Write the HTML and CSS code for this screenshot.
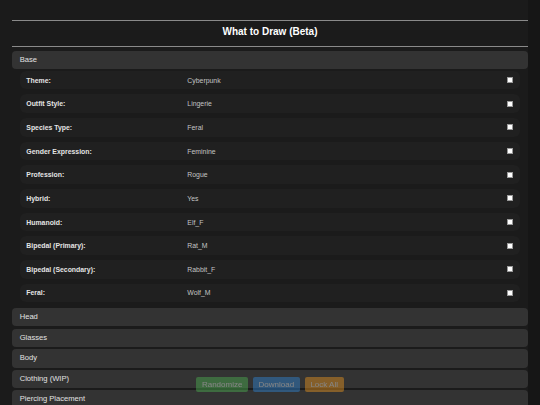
FILE: index.html
```html
<!DOCTYPE html>
<html>
<head>
<meta charset="utf-8">
<link rel="stylesheet" href="styles.css">
</head>
<body>
<div class="page">
  <hr class="rule">
  <h1 class="title">What to Draw (Beta)</h1>
  <hr class="rule">
  <section class="section open">
    <div class="sec-head">Base</div>
    <div class="sec-body">
      <div class="row"><span class="label">Theme:</span><span class="value">Cyberpunk</span><span class="check"></span></div>
      <div class="row"><span class="label">Outfit Style:</span><span class="value">Lingerie</span><span class="check"></span></div>
      <div class="row"><span class="label">Species Type:</span><span class="value">Feral</span><span class="check"></span></div>
      <div class="row"><span class="label">Gender Expression:</span><span class="value">Feminine</span><span class="check"></span></div>
      <div class="row"><span class="label">Profession:</span><span class="value">Rogue</span><span class="check"></span></div>
      <div class="row"><span class="label">Hybrid:</span><span class="value">Yes</span><span class="check"></span></div>
      <div class="row"><span class="label">Humanoid:</span><span class="value">Elf_F</span><span class="check"></span></div>
      <div class="row"><span class="label">Bipedal (Primary):</span><span class="value">Rat_M</span><span class="check"></span></div>
      <div class="row"><span class="label">Bipedal (Secondary):</span><span class="value">Rabbit_F</span><span class="check"></span></div>
      <div class="row"><span class="label">Feral:</span><span class="value">Wolf_M</span><span class="check"></span></div>
    </div>
  </section>
  <section class="section"><div class="sec-head">Head</div></section>
  <section class="section"><div class="sec-head">Glasses</div></section>
  <section class="section"><div class="sec-head">Body</div></section>
  <section class="section"><div class="sec-head">Clothing (WIP)</div></section>
  <section class="section"><div class="sec-head">Piercing Placement</div></section>
</div>
<div class="actions">
  <button class="btn green">Randomize</button>
  <button class="btn blue">Download</button>
  <button class="btn orange">Lock All</button>
</div>
</body>
</html>
```
FILE: styles.css
```css
html {
  background: #161616;
}
body {
  margin: 0;
  font-family: "Liberation Sans", Arial, sans-serif;
  color: #ddd;
}
.page {
  width: 528px;
  box-sizing: border-box;
  padding: 20px 0 20px 12px;
  background: #1b1b1b;
}
.rule {
  border: 0;
  height: 1px;
  margin: 0;
  background: #8a8a8a;
}
.title {
  margin: 0;
  height: 25px;
  box-sizing: border-box;
  padding-top: 5px;
  font-size: 10px;
  line-height: 12px;
  font-weight: bold;
  text-align: center;
  color: #fff;
}
.rule + .section {
  margin-top: 4px;
}
.section {
  margin-bottom: 2.2px;
}
.sec-head {
  height: 18.4px;
  line-height: 18.4px;
  padding-left: 7.7px;
  background: #333333;
  border-radius: 4px;
  font-size: 7.6px;
  color: #e2e2e2;
}
.sec-body {
  display: flex;
  flex-direction: column;
  gap: 5.07px;
  padding: 1.4px 8px 3.5px 8px;
}
.row {
  display: flex;
  align-items: center;
  height: 18.6px;
  padding: 0 7.5px 0 6.3px;
  background: #202020;
  border-radius: 6px;
  font-size: 6.9px;
}
.label {
  width: 161px;
  font-weight: bold;
  color: #e4e4e4;
}
.value {
  color: #c4c4c4;
}
.check {
  margin-left: auto;
  width: 6px;
  height: 6px;
  box-sizing: border-box;
  background: #fff;
  border: 0.5px solid #999;
}
.actions {
  position: fixed;
  left: 0;
  right: 0;
  bottom: 13px;
  display: flex;
  justify-content: center;
  gap: 4.5px;
  opacity: 0.45;
}
.btn {
  height: 15px;
  border: 0;
  border-radius: 2px;
  padding: 0;
  white-space: nowrap;
  font-family: "Liberation Sans", Arial, sans-serif;
  font-size: 8px;
  color: #e8e8e8;
}
.green { background: #4caf50; width: 51.7px; }
.blue { background: #2f86d6; width: 47.7px; }
.orange { background: #e8961f; width: 39px; }
```
